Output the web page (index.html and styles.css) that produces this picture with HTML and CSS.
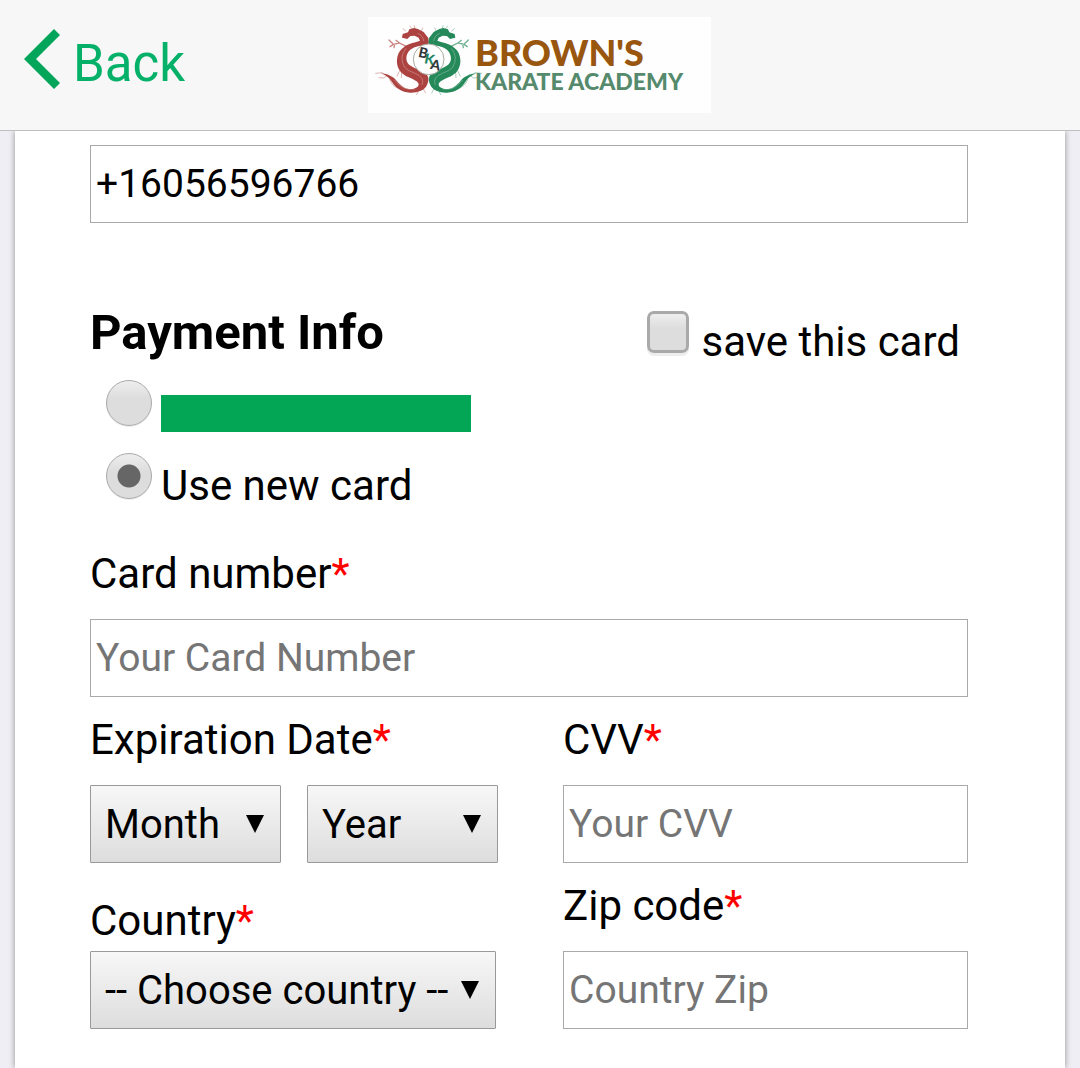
FILE: index.html
```html
<!DOCTYPE html>
<html lang="en">
<head>
<meta charset="utf-8">
<meta name="viewport" content="width=device-width, initial-scale=1">
<title>Brown's Karate Academy</title>
<link rel="stylesheet" href="styles.css">
</head>
<body>
<header class="topbar">
  <button class="back" type="button">
    <svg class="back-icon" viewBox="0 0 36 60" aria-hidden="true"><path d="M30 0l6 6-24 24 24 24-6 6L0 30z"/></svg>
    <span>Back</span>
  </button>
  <svg class="logo" viewBox="0 0 343 96" role="img" aria-label="Brown's Karate Academy">
    <defs>
      <g id="dragon">
        <path fill="currentColor" d="M108 71l2-11 16-5 4-9 14-4 12 3 17 9 14 18 2 16-8 7h-19c-24 4-40 16-41 38 0 22 20 27 43 36 22 9 28 24 20 42-8 20-32 26-52 25-24-1-42-13-54-32-8-13-18-20-34-26 22 2 38 10 48 22 14 18 30 27 47 25 18-2 25-14 13-23-14-10-37-14-50-31-15-21-11-52 6-67 13-12 27-17 43-20l11-4-4-9-12-6-13 1-9 9-9-2z"/>
        <path fill="none" stroke="currentColor" stroke-width="4" stroke-linecap="round" opacity=".65" d="M122 98l-22-11-18 4-13-13M82 91l-10 7M86 90l-2 11M100 87l-10-8"/>
        <path fill="none" stroke="currentColor" stroke-width="2" stroke-linecap="round" opacity=".6" d="M101 170l-8 17M107 174l-1 17M112 177l10 10M119 51l-8-7M137 43l-6-7M147 44l-2-9M166 50l4-8M49 176l-20 2M66 183l-13 9-14-1M71 197c8 18 18 25 34 28M158 229l-6 13M171 223l8 14"/>
        <path fill="none" stroke="#fff" stroke-width="3" opacity=".28" d="M155 58q17 8 18 23M120 103q-22 27-4 57 8 10 31 18 31 12 21 35M86 198q25 34 60 27"/>
      </g>
    </defs>
    <g transform="scale(.3333) translate(-6 -9)">
      <use class="red" href="#dragon"/>
      <use class="green" href="#dragon" transform="translate(376) scale(-1 1)"/>
      <circle cx="188" cy="136" r="46" fill="#fff" stroke="#a9aaa2" stroke-width="3"/>
      <g font-size="42">
        <text transform="translate(155 128) rotate(12)" fill="#34383a">B</text>
        <text transform="translate(173 147) rotate(12)" fill="#238564">K</text>
        <text transform="translate(191 164) rotate(12)" fill="#34383a">A</text>
      </g>
    </g>
    <text class="logo-name" x="107" y="49">BROWN'S</text>
    <text class="logo-sub" x="107" y="73">KARATE ACADEMY</text>
  </svg>
</header>

<main class="sheet">
  <form class="form">
    <input class="field" type="tel" aria-label="Phone number" value="+16056596766">

    <div class="payment-head">
      <h2 class="title">Payment Info</h2>
      <label class="choice save"><input class="check" type="checkbox"><span>save this card</span></label>
    </div>

    <div class="cards">
      <label class="choice"><input class="radio" type="radio" name="card" aria-label="Saved card"><span class="hidden-card"></span></label>
      <label class="choice"><input class="radio" type="radio" name="card" checked><span>Use new card</span></label>
    </div>

    <div class="group number">
      <label class="label" for="number">Card number<span class="req">*</span></label>
      <input class="field" id="number" type="text" placeholder="Your Card Number">
    </div>

    <div class="columns">
      <div class="group">
        <label class="label" for="month">Expiration Date<span class="req">*</span></label>
        <div class="dates">
          <div class="select">
            <select class="field" id="month"><option>Month</option></select>
            <svg class="arrow" viewBox="0 0 18 18" aria-hidden="true"><path d="M0 0h18L9 18z"/></svg>
          </div>
          <div class="select">
            <select class="field" aria-label="Expiration year"><option>Year</option></select>
            <svg class="arrow" viewBox="0 0 18 18" aria-hidden="true"><path d="M0 0h18L9 18z"/></svg>
          </div>
        </div>
      </div>
      <div class="group">
        <label class="label" for="cvv">CVV<span class="req">*</span></label>
        <input class="field" id="cvv" type="text" placeholder="Your CVV">
      </div>
      <div class="group country">
        <label class="label" for="country">Country<span class="req">*</span></label>
        <div class="select">
          <select class="field" id="country"><option>-- Choose country --</option></select>
          <svg class="arrow" viewBox="0 0 18 18" aria-hidden="true"><path d="M0 0h18L9 18z"/></svg>
        </div>
      </div>
      <div class="group">
        <label class="label" for="zip">Zip code<span class="req">*</span></label>
        <input class="field" id="zip" type="text" placeholder="Country Zip">
      </div>
    </div>
  </form>
</main>
</body>
</html>
```

FILE: styles.css
```css
* {
  box-sizing: border-box;
}

body {
  margin: 0;
  min-height: 100vh;
  display: flex;
  flex-direction: column;
  background: #efeef4;
  color: #000;
  font-family: Roboto, sans-serif;
  font-size: 42px;
}

.topbar {
  display: grid;
  grid-template-columns: 1fr auto 1fr;
  align-items: center;
  height: 131px;
  padding: 0 25px 0 24px;
  background: #f7f7f7;
  border-bottom: 1px solid #bfbfbf;
  position: relative;
}

.back {
  display: flex;
  align-items: flex-start;
  gap: 13px;
  justify-self: start;
  padding: 0 0 2px;
  border: 0;
  background: none;
  color: #05b068;
  font: 51px/70px Roboto, sans-serif;
}

.back-icon {
  width: 36px;
  height: 60px;
  fill: #03a55a;
}

.logo {
  width: 343px;
  height: 96px;
  background: #fefefe;
  font-family: Lato, sans-serif;
  font-weight: 900;
}

.red {
  color: #ad4340;
}

.green {
  color: #25895a;
}

.logo-name {
  font-size: 36px;
  fill: #99560f;
}

.logo-sub {
  font-size: 23px;
  fill: #558a6d;
}

.sheet {
  flex: 1;
  margin: 0 15px;
  padding: 14px 97px 39px 75px;
  background: #fff;
  box-shadow: 0 0 6px rgba(0, 0, 0, .4);
}

.field {
  display: block;
  width: 100%;
  height: 78px;
  margin: 0;
  padding: 0 5px;
  border: 1px solid #a9a9a9;
  border-radius: 0;
  background: #fff;
  color: #000;
  font: 39px Roboto, sans-serif;
}

.field::placeholder {
  color: #757575;
}

.payment-head {
  display: flex;
  align-items: flex-start;
  justify-content: space-between;
  height: 68px;
  margin: 80px 0 9px;
}

.title {
  margin: 0;
  font-size: 49px;
  line-height: 60px;
}

.choice {
  display: flex;
  align-items: flex-start;
  gap: 9px;
  line-height: 66px;
}

.save {
  gap: 12px;
  margin: 8px 8px 0 0;
  line-height: 62px;
}

.check,
.radio {
  appearance: none;
  flex: none;
  margin: 0;
  background: linear-gradient(#eee, #ddd 40%, #ddd);
}

.check {
  width: 42px;
  height: 42px;
  border: 3px solid #a9a9a9;
  border-radius: 7px;
  box-shadow: 0 3px 0 #eee;
}

.radio {
  width: 46px;
  height: 46px;
  border: 1px solid #a9a9a9;
  border-radius: 50%;
  box-shadow: 0 1px 0 #eee;
}

.radio:checked {
  background: radial-gradient(circle, #666 11px, transparent 12px), linear-gradient(#eee, #ddd 40%, #ddd);
}

.cards {
  display: grid;
  gap: 9px;
  padding-left: 16px;
}

.cards .choice {
  height: 64px;
}

.hidden-card {
  width: 310px;
  height: 37px;
  margin-top: 15px;
  background: #03a654;
}

.group {
  display: flex;
  flex-direction: column;
  gap: 20px;
  padding-top: 18px;
}

.number {
  padding-top: 32px;
}

.label {
  line-height: 50px;
}

.req {
  color: #f00;
}

.columns {
  display: grid;
  grid-template-columns: 408fr 405fr;
  column-gap: 65px;
}

.dates {
  display: grid;
  grid-template-columns: 1fr 1fr;
  gap: 26px;
}

.country {
  gap: 5px;
  padding-top: 33px;
  padding-right: 2px;
}

.select {
  display: grid;
  align-items: center;
}

.select > * {
  grid-area: 1 / 1;
}

.select .field {
  appearance: none;
  padding: 0 44px 0 14px;
  border-color: #999;
  border-radius: 1px;
  background: linear-gradient(#f7f7f7, #ddd);
  font-size: 40px;
}

.arrow {
  justify-self: end;
  width: 18px;
  height: 18px;
  margin-right: 17px;
  pointer-events: none;
}
```
